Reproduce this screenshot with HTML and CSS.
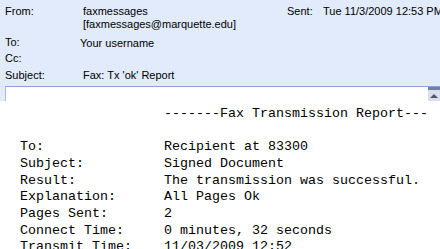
FILE: index.html
```
<!DOCTYPE html>
<html>
<head>
<meta charset="utf-8">
<link rel="stylesheet" href="styles.css">
</head>
<body>
<div class="header">
  <div class="row row-from">
    <span class="label">From:</span>
    <span class="value from-value">faxmessages<br>[faxmessages@marquette.edu]</span>
    <span class="sent-label">Sent:</span>
    <span class="sent-value">Tue 11/3/2009 12:53 PM</span>
  </div>
  <div class="row row-to">
    <span class="label">To:</span>
    <span class="value to-value">Your username</span>
  </div>
  <div class="row row-cc">
    <span class="label">Cc:</span>
    <span class="value"></span>
  </div>
  <div class="row row-subject">
    <span class="label">Subject:</span>
    <span class="value">Fax: Tx 'ok' Report</span>
  </div>
</div>
<div class="strip">
  <div class="box">
    <div class="scroll">
      <div class="scroll-thumb"></div>
      <div class="scroll-btn"><span class="arrow"></span></div>
    </div>
  </div>
</div>
<div class="body">
<pre class="msg">                    -------Fax Transmission Report---------

  To:               Recipient at 83300
  Subject:          Signed Document
  Result:           The transmission was successful.
  Explanation:      All Pages Ok
  Pages Sent:       2
  Connect Time:     0 minutes, 32 seconds
  Transmit Time:    11/03/2009 12:52</pre>
</div>
</body>
</html>
```
FILE: styles.css
```
html, body {
  margin: 0;
  padding: 0;
  background: #ffffff;
  width: 440px;
  height: 249px;
  overflow: hidden;
}
.header {
  background: #e1ebfb;
  padding: 5px 0 4px 5px;
  font-family: "Liberation Sans", Arial, sans-serif;
  font-size: 11px;
  line-height: 13px;
  color: #000;
  white-space: nowrap;
  overflow: hidden;
}
.row {
  display: flex;
  height: 13px;
}
.row-from { height: 26px; }
.row-to { margin-top: 5px; }
.row-cc { margin-top: 3px; }
.row-subject { margin-top: 4px; }
.label {
  width: 78px;
  flex: none;
}
.from-value {
  width: 204px;
  flex: none;
}
.to-value {
  margin-left: -3px;
  position: relative;
  top: 1px;
}
.sent-label {
  width: 36px;
  flex: none;
}
.sent-value {
  flex: none;
  white-space: nowrap;
}
.strip {
  background: #e1ebfb;
  padding-left: 5px;
}
.box {
  position: relative;
  height: 14px;
  background: #fff;
  border-top: 1px solid #8aa4d2;
  border-left: 1px solid #a9bde0;
}
.scroll {
  position: absolute;
  right: 0;
  top: 0;
  width: 12px;
  height: 14px;
  display: flex;
  flex-direction: column;
}
.scroll-thumb {
  height: 3px;
  background: #6f7fa6;
}
.scroll-btn {
  flex: 1;
  background: #d9dfec;
  display: flex;
  align-items: center;
  justify-content: center;
}
.arrow {
  width: 0;
  height: 0;
  border-left: 4px solid transparent;
  border-right: 4px solid transparent;
  border-bottom: 4px solid #4d566b;
  margin-top: 1px;
}
.body {
  width: 426px;
  overflow: hidden;
}
.msg {
  margin: 5px 0 0 4px;
  font-family: "Liberation Mono", "Courier New", monospace;
  font-size: 13.33px;
  line-height: 16.67px;
  color: #000;
  white-space: pre;
}
```
